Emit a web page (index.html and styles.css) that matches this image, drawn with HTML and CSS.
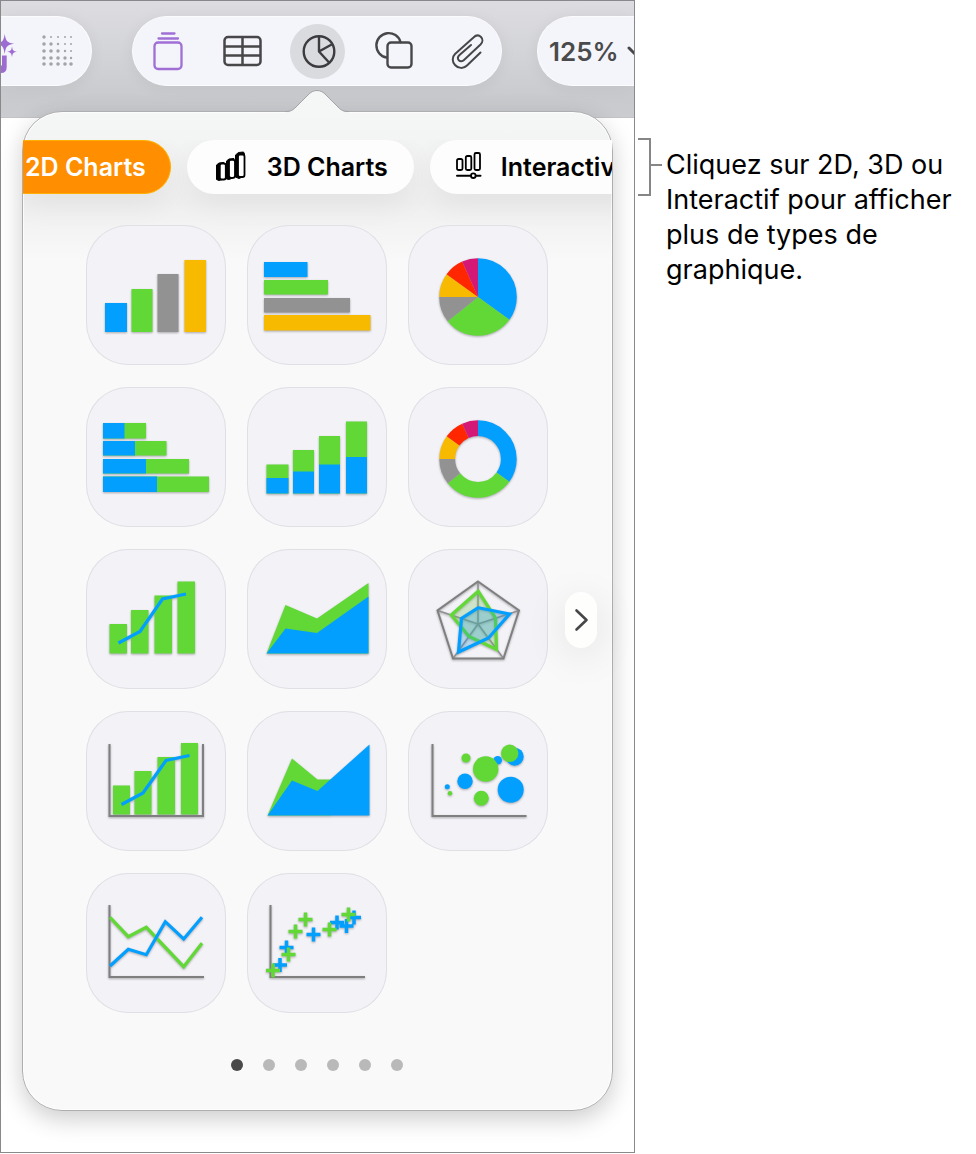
FILE: index.html
```html
<!DOCTYPE html>
<html lang="fr">
<head>
  <title>Types de graphique</title>
  <meta charset="UTF-8">
  <meta name="viewport" content="width=device-width, initial-scale=1">
  <link rel="stylesheet" href="styles.css">
</head>
<body>
  <div class="figure">
    <div class="window">

      <!-- Toolbar -->
      <div class="toolbar">
        <div class="pill pill-left">
          <button class="tool-wand" aria-label="Magic">
            <svg width="18" height="44" viewBox="0 0 18 44" fill="#9d6cd2">
              <path d="M3.700 5C5 12.500 6 13.500 13 14.700C6 16 5 17 3.700 25C2.500 17 1.500 16 -6 14.700C1.500 13.500 2.500 12.500 3.700 5Z"/>
              <path d="M11 17.500C11.700 21.500 12 22 16 22.700C12 23.500 11.700 24 11 28C10.300 24 10 23.500 6 22.700C10 22 10.300 21.500 11 17.500Z"/>
              <path d="M-4 32L1 37V26.500H5.700V38Q5.700 44 0 44H-4Z"/>
            </svg>
          </button>
          <button class="tool-dots" aria-label="Grid">
            <svg width="34" height="34" viewBox="0 0 34 34" fill="#a3a3a8">
              <circle cx="3" cy="3" r="1.700"/><circle cx="10" cy="3" r="1"/><circle cx="17" cy="3" r="1"/><circle cx="24" cy="3" r="1"/><circle cx="30" cy="3" r="1"/>
              <circle cx="3" cy="10" r="1.800"/><circle cx="10" cy="10" r="1.700"/><circle cx="17" cy="10" r="1.200"/><circle cx="24" cy="10" r="1"/><circle cx="30" cy="10" r="1"/>
              <circle cx="3" cy="17" r="1.800"/><circle cx="10" cy="17" r="1.800"/><circle cx="17" cy="17" r="1.700"/><circle cx="24" cy="17" r="1.200"/><circle cx="30" cy="17" r="1"/>
              <circle cx="3" cy="24" r="1.800"/><circle cx="10" cy="24" r="1.800"/><circle cx="17" cy="24" r="1.800"/><circle cx="24" cy="24" r="1.700"/><circle cx="30" cy="24" r="1.200"/>
              <circle cx="3" cy="30" r="1.800"/><circle cx="10" cy="30" r="1.800"/><circle cx="17" cy="30" r="1.800"/><circle cx="24" cy="30" r="1.800"/><circle cx="30" cy="30" r="1.800"/>
            </svg>
          </button>
        </div>

        <div class="pill pill-main">
          <button class="tool" aria-label="Add slide">
            <svg width="40" height="40" viewBox="0 0 40 40" fill="none" stroke="#a06fd6" stroke-width="2.300" stroke-linecap="round">
              <path d="M14 2.500H26.500M10.500 7.500H30"/>
              <rect x="6.500" y="11.500" width="27" height="26.500" rx="3.500"/>
            </svg>
          </button>
          <button class="tool" aria-label="Table">
            <svg width="40" height="40" viewBox="0 0 40 40" fill="none" stroke="#47474a" stroke-width="2.500">
              <rect x="1.500" y="6" width="36" height="28" rx="3.500"/>
              <path d="M1.500 15.500H37.500M1.500 24.500H37.500M19.500 6V34"/>
            </svg>
          </button>
          <button class="tool tool-active" aria-label="Chart">
            <svg width="40" height="40" viewBox="0 0 40 40" fill="none" stroke="#3c3c3f" stroke-width="2.400" stroke-linejoin="round">
              <circle cx="21" cy="20.500" r="15.300"/>
              <path d="M21 5V20.500L34.500 13M21 20.500L31.500 32"/>
            </svg>
          </button>
          <button class="tool" aria-label="Shape">
            <svg width="40" height="40" viewBox="0 0 40 40" fill="none" stroke="#47474a" stroke-width="2.400" stroke-linecap="round">
              <path d="M13.500 26.500A12.300 12.300 0 1 1 27.500 11"/>
              <rect x="14.500" y="11.500" width="24" height="25" rx="3.500"/>
            </svg>
          </button>
          <button class="tool" aria-label="Media">
            <svg width="40" height="40" viewBox="0 0 40 40" fill="none" stroke="#47474a" stroke-width="2" stroke-linecap="round" stroke-linejoin="round">
              <path d="M32.500 21.500L19 34.500C15.500 38 10 37.500 7 34C4 31 4 26 7 23L25.500 6.500C28 4 31 4 33 6C35 8 35 11 32.500 13.500L16 29C14.500 30.500 12 30.500 11 29.500C9.500 28 9.500 26 11.500 24L23 14"/>
            </svg>
          </button>
        </div>

        <div class="pill pill-right">
          <button class="zoom-menu">125%
            <svg width="16" height="10" viewBox="0 0 16 10" fill="none" stroke="#47474a" stroke-width="3" stroke-linecap="round"><path d="M2 2L8 8L14 2"/></svg>
          </button>
        </div>
      </div>

      <!-- Chart popover -->
      <div class="popover">
        <svg class="popover-arrow" width="64" height="26" viewBox="0 0 64 26">
          <path d="M0 24C6 24 8 22 11 19L23 7C28 1 36 1 41 7L53 19C56 22 58 24 64 24V26H0Z" fill="#f5f6f6"/>
          <path d="M0 23.500C6 23.500 8 22 11 19L23 7C28 1 36 1 41 7L53 19C56 22 58 23.500 64 23.500" fill="none" stroke="#a3a4a7"/>
        </svg>

        <div class="tabs">
          <button class="tab tab-selected">2D Charts</button>
          <button class="tab">
            <svg class="tab-icon" width="32" height="32" viewBox="0 0 32 32" stroke="#000" stroke-width="1.800" stroke-linejoin="round">
              <path d="M1.500 14L4 12L9 11.500V28L4 29.500L1.500 28.500Z" fill="#000" stroke-width="1"/>
              <path d="M11.500 10L14 8L19 7.500V26.500L14 28.500L11.500 28Z" fill="#000" stroke-width="1"/>
              <path d="M20.500 4L23.500 1.500L28.500 1L29.500 3V25L24 27.500L20.500 26Z" fill="#000" stroke-width="1"/>
              <rect x="4.800" y="12.500" width="6" height="16" rx="2" fill="#fff"/>
              <rect x="14" y="8.800" width="6" height="18" rx="2" fill="#fff"/>
              <rect x="23" y="3.500" width="6.500" height="22.500" rx="2" fill="#fff"/>
            </svg>
            3D Charts
          </button>
          <button class="tab tab-interactive">
            <svg class="tab-icon" width="26" height="32" viewBox="0 0 26 32" fill="none" stroke="#000" stroke-width="1.800" stroke-linecap="round">
              <rect x="1" y="8" width="5.500" height="11" rx="1.500"/>
              <rect x="9.800" y="5" width="5.500" height="14" rx="1.500"/>
              <rect x="18.500" y="2" width="5.500" height="17" rx="1.500"/>
              <path d="M1 24.700H15M20 24.700H24.500" stroke-width="2"/>
              <circle cx="17.300" cy="24.700" r="2.300"/>
            </svg>
            Interactive
          </button>
        </div>

        <div class="chart-grid">
          <button class="chart" aria-label="Column">
            <svg viewBox="0 0 140 140">
              <path class="blue" d="M19 78h22v29h-22z"/>
              <path class="green" d="M45.500 64h21v43h-21z"/>
              <path class="gray" d="M71.500 49h21v58h-21z"/>
              <path class="yellow" d="M98.500 35h21.500v72h-21.500z"/>
            </svg>
          </button>
          <button class="chart" aria-label="Bar">
            <svg viewBox="0 0 140 140">
              <path class="blue" d="M17 37h43.500v15h-43.500z"/>
              <path class="green" d="M17 55h64v14.500h-64z"/>
              <path class="gray" d="M17 73h86v14.500h-86z"/>
              <path class="yellow" d="M17 90h106.500v15.500h-106.500z"/>
            </svg>
          </button>
          <button class="chart" aria-label="Pie">
            <svg viewBox="0 0 140 140">
              <g class="ring pie" transform="rotate(-90 70 72)">
                <circle class="s-blue" cx="70" cy="72" r="19.400" pathLength="100" stroke-dasharray="35 65"/>
                <circle class="s-green" cx="70" cy="72" r="19.400" pathLength="100" stroke-dasharray="29.200 70.800" stroke-dashoffset="-35"/>
                <circle class="s-gray" cx="70" cy="72" r="19.400" pathLength="100" stroke-dasharray="10.800 89.200" stroke-dashoffset="-64.200"/>
                <circle class="s-yellow" cx="70" cy="72" r="19.400" pathLength="100" stroke-dasharray="10 90" stroke-dashoffset="-75"/>
                <circle class="s-red" cx="70" cy="72" r="19.400" pathLength="100" stroke-dasharray="8.300 91.700" stroke-dashoffset="-85"/>
                <circle class="s-pink" cx="70" cy="72" r="19.400" pathLength="100" stroke-dasharray="6.700 93.300" stroke-dashoffset="-93.300"/>
              </g>
            </svg>
          </button>

          <button class="chart" aria-label="Stacked bar">
            <svg viewBox="0 0 140 140">
              <path class="green" d="M17 36h43v15.500h-43zM17 54h63.500v14.500h-63.500zM17 72h86v14.500h-86zM17 89.500h106v15.500h-106z"/>
              <path class="blue" d="M17 36h21.500v15.500h-21.500zM17 54h32v14.500h-32zM17 72h43v14.500h-43zM17 89.500h54v15.500h-54z"/>
            </svg>
          </button>
          <button class="chart" aria-label="Stacked column">
            <svg viewBox="0 0 140 140">
              <path class="green" d="M19.500 77.500h22v29h-22zM46 63h21v43.500h-21zM72 49h21v57.500h-21zM99 34.500h21v72h-21z"/>
              <path class="blue" d="M19.500 91h22v15.500h-22zM46 84.500h21v22h-21zM72 77.500h21v29h-21zM99 70h21v36.500h-21z"/>
            </svg>
          </button>
          <button class="chart" aria-label="Donut">
            <svg viewBox="0 0 140 140">
              <g class="ring donut" transform="rotate(-90 70 72)">
                <circle class="s-blue" cx="70" cy="72" r="30.800" pathLength="100" stroke-dasharray="35 65"/>
                <circle class="s-green" cx="70" cy="72" r="30.800" pathLength="100" stroke-dasharray="29.200 70.800" stroke-dashoffset="-35"/>
                <circle class="s-gray" cx="70" cy="72" r="30.800" pathLength="100" stroke-dasharray="10.800 89.200" stroke-dashoffset="-64.200"/>
                <circle class="s-yellow" cx="70" cy="72" r="30.800" pathLength="100" stroke-dasharray="10 90" stroke-dashoffset="-75"/>
                <circle class="s-red" cx="70" cy="72" r="30.800" pathLength="100" stroke-dasharray="8.300 91.700" stroke-dashoffset="-85"/>
                <circle class="s-pink" cx="70" cy="72" r="30.800" pathLength="100" stroke-dasharray="6.700 93.300" stroke-dashoffset="-93.300"/>
              </g>
            </svg>
          </button>

          <button class="chart" aria-label="Column and line">
            <svg viewBox="0 0 140 140">
              <path class="green" d="M23.500 75h17.500v29.500h-17.500zM45 61h17.500v43.500h-17.500zM68.500 46.500h17.500v58h-17.500zM91.500 32.500h17.500v72h-17.500z"/>
              <path class="line s-blue" d="M32.500 94L54 82.500L76.500 50L100 45"/>
            </svg>
          </button>
          <button class="chart" aria-label="Stacked area">
            <svg viewBox="0 0 140 140">
              <path class="green" d="M19.500 104.500L38.500 56L70 69.500L121.500 34V104.500Z"/>
              <path class="blue" d="M19.500 104.500L38.500 79.500L70 84L121.500 47.500V104.500Z"/>
            </svg>
          </button>
          <button class="chart" aria-label="Radar">
            <svg viewBox="0 0 140 140">
              <path class="spokes" d="M70 75V32.500M70 75L111 61.500M70 75L95.500 109.500M70 75L45 109.500M70 75L29.500 61.500"/>
              <path class="web" d="M70 32.500L111 61.500L95.500 109.500H45L29.500 61.500Z"/>
              <path class="line s-green f-green" d="M70.300 42.300L87.500 69L88.500 100.500L61 87.500L43.300 66Z"/>
              <path class="line s-blue f-blue" d="M70.300 58.700L101.500 65L80.500 89L50.500 103L53.500 69.500Z"/>
            </svg>
          </button>

          <button class="chart" aria-label="Two axis">
            <svg viewBox="0 0 140 140">
              <path class="axis" d="M23.500 33V105H117V33"/>
              <path class="green" d="M27 74.500h17v29h-17zM48.500 60h17v43.500h-17zM71.500 46h17.500v57.500h-17.500zM95 32h17v71.500h-17z"/>
              <path class="line s-blue" d="M35.500 93.500L57 82L80 49.500L103.500 44.500"/>
            </svg>
          </button>
          <button class="chart" aria-label="Area">
            <svg viewBox="0 0 140 140">
              <path class="green" d="M20.500 104.500L45 47.500L70.500 68.500H84V104.500Z"/>
              <path class="blue" d="M20.500 104.500L45 69.500L70.500 80L122.500 33.500V104.500Z"/>
            </svg>
          </button>
          <button class="chart" aria-label="Bubble">
            <svg viewBox="0 0 140 140">
              <path class="axis" d="M24.500 33V105H118.500"/>
              <g class="blue">
                <circle cx="39.300" cy="75.700" r="2.500"/>
                <circle cx="57" cy="70.300" r="7.700"/>
                <circle cx="89.700" cy="49.300" r="4.300"/>
                <circle cx="106.700" cy="45.700" r="9"/>
                <circle cx="102.700" cy="78.700" r="13"/>
              </g>
              <g class="green">
                <circle cx="42" cy="82.300" r="2.300"/>
                <circle cx="58" cy="47" r="4.500"/>
                <circle cx="77.700" cy="58" r="12.700"/>
                <circle cx="101.700" cy="42.300" r="8.700"/>
                <circle cx="73.300" cy="87.300" r="7.500"/>
              </g>
            </svg>
          </button>

          <button class="chart" aria-label="Line">
            <svg viewBox="0 0 140 140">
              <path class="axis" d="M23.500 32V104H118"/>
              <path class="line s-green" d="M24 44.300L42.300 63.700L60.300 54.300L97.700 93.700L116 70.300"/>
              <path class="line s-blue" d="M24 93L42.300 76.300L60.300 81.700L79.300 48.700L97.700 66L116 44.300"/>
            </svg>
          </button>
          <button class="chart" aria-label="Scatter">
            <svg viewBox="0 0 140 140">
              <path class="axis" d="M23.500 32V104H118"/>
              <path class="plus s-blue" d="M59.500 61.500h14m-7-7v14M32.500 74.500h14m-7-7v14M26 92h14m-7-7v14M83 49.500h14m-7-7v14M92.500 53h14m-7-7v14M100 44.500h14m-7-7v14"/>
              <path class="plus s-green" d="M51.500 46.500h14m-7-7v14M41.500 58.500h14m-7-7v14M34.500 81.500h14m-7-7v14M19 97.500h14m-7-7v14M75.500 56.500h14m-7-7v14M94.500 41.500h14m-7-7v14"/>
            </svg>
          </button>
        </div>

        <div class="pager">
          <button class="dot dot-current" aria-label="Page 1"></button>
          <button class="dot" aria-label="Page 2"></button>
          <button class="dot" aria-label="Page 3"></button>
          <button class="dot" aria-label="Page 4"></button>
          <button class="dot" aria-label="Page 5"></button>
          <button class="dot" aria-label="Page 6"></button>
        </div>

        <button class="next" aria-label="Next">
          <svg width="16" height="24" viewBox="0 0 16 24" fill="none" stroke="#47474a" stroke-width="2.600" stroke-linecap="round" stroke-linejoin="round"><path d="M3.500 2.500L13.500 12L3.500 21.500"/></svg>
        </button>
      </div>
    </div>

    <!-- Callout -->
    <div class="callout">
      <svg class="bracket" width="24" height="60" viewBox="0 0 24 60" fill="none" stroke="#868686" stroke-width="2">
        <path d="M0 2H12V58H0M12 28H24"/>
      </svg>
      <p>Cliquez sur 2D, 3D ou Interactif pour afficher plus de types de graphique.</p>
    </div>
  </div>
</body>
</html>
```

FILE: styles.css
```css
* {
  box-sizing: border-box;
}

body {
  margin: 0;
  background: #fff;
  font-family: Inter, "Liberation Sans", sans-serif;
  color: #000;
}

button {
  border: none;
  margin: 0;
  padding: 0;
  background: none;
  font: inherit;
  color: inherit;
  cursor: pointer;
}

svg {
  display: block;
  flex-shrink: 0;
}

.figure {
  display: grid;
  grid-template-columns: minmax(0, 1fr) 341px;
  align-items: start;
}

.window {
  border: 1px solid #89898c;
  overflow: hidden;
}

/* Toolbar */
.toolbar {
  display: flex;
  height: 117px;
  padding-top: 15px;
  background: linear-gradient(#dddde1, #d2d3d7 50%, #c9cacd 85%, #cbccd0);
  border-bottom: 1px solid #c3c3c6;
}

.pill {
  display: flex;
  align-items: center;
  height: 70px;
  background: #f4f5fa;
  border: 1px solid #fcfcfe;
  box-shadow: 0 2px 16px rgba(0, 0, 0, 0.06);
}

.pill-left {
  width: 91px;
  margin-right: 40px;
  gap: 22px;
  border-left: none;
  border-radius: 0 35px 35px 0;
}

.pill-main {
  gap: 20px;
  padding: 0 6px 0 7px;
  margin-right: 35px;
  border-radius: 35px;
}

.pill-right {
  flex: 1;
  min-width: 0;
  overflow: hidden;
  padding-left: 11px;
  border-right: none;
  border-radius: 35px 0 0 35px;
}

.tool {
  display: flex;
  align-items: center;
  justify-content: center;
  width: 55px;
  height: 55px;
  border-radius: 50%;
}

.tool-active {
  background: #dadbdf;
}

.zoom-menu {
  display: flex;
  align-items: center;
  gap: 8px;
  font-size: 26px;
  font-weight: 600;
  color: #4a4a4d;
}

/* Popover */
.popover {
  position: relative;
  margin: -7px 21px 41px;
  padding: 28px 0 39px;
  border: 1px solid #aeaeb0;
  border-radius: 40px;
  background: linear-gradient(#f5f6f6, #efefef 9%, #f9f9f9 15%, #f9f9f9);
  box-shadow: inset 0 0 0 1px #fdfdfd, 0 8px 24px rgba(0, 0, 0, 0.2);
}

.popover-arrow {
  position: absolute;
  top: -24px;
  left: 50%;
  margin-left: -33px;
}

.tabs {
  display: flex;
  gap: 16px;
  margin-bottom: -39px;
  padding-bottom: 70px;
  overflow: hidden;
}

.tab {
  display: flex;
  align-items: center;
  flex-shrink: 0;
  gap: 20px;
  height: 54px;
  padding: 0 26px 0 28px;
  border-radius: 27px;
  background: #fdfdfd;
  box-shadow: 0 10px 30px rgba(0, 0, 0, 0.06);
  font-size: 25px;
  font-weight: 600;
}

.tab-selected {
  padding: 0 24px 0 2px;
  border: 1px solid #ffb000;
  border-left: none;
  border-radius: 0 27px 27px 0;
  background: #ff8e00;
  color: #fff;
}

.tab-interactive {
  gap: 19px;
  padding-left: 26px;
}

.chart-grid {
  position: relative;
  display: grid;
  grid-template-columns: repeat(3, 140px);
  justify-content: center;
  gap: 22px 21px;
  padding-right: 1px;
}

.chart {
  width: 140px;
  height: 140px;
  border-radius: 42px;
  background: #f2f2f7;
  box-shadow: inset 0 0 0 1px #dfdfe4;
}

.pager {
  display: flex;
  justify-content: center;
  gap: 20px;
  margin-top: 46px;
  padding-right: 2px;
}

.dot {
  width: 12px;
  height: 12px;
  border-radius: 50%;
  background: #b9b9b9;
}

.dot-current {
  background: #4a4a4a;
}

.next {
  position: absolute;
  top: 480px;
  right: 15px;
  display: flex;
  align-items: center;
  justify-content: center;
  width: 32px;
  height: 56px;
  border-radius: 16px;
  background: #fefefd;
  box-shadow: 0 8px 40px rgba(0, 0, 0, 0.1);
}

/* Chart thumbnails */
.chart svg {
  filter: drop-shadow(0 1px 1px rgba(0, 0, 0, 0.3));
}

.blue { fill: #029fff; }
.green { fill: #61d836; }
.gray { fill: #929292; }
.yellow { fill: #f8ba00; }

.s-blue { stroke: #029fff; }
.s-green { stroke: #61d836; }
.s-gray { stroke: #929292; }
.s-yellow { stroke: #f8ba00; }
.s-red { stroke: #ff2600; }
.s-pink { stroke: #d41876; }

.ring,
.line,
.plus,
.axis,
.web,
.spokes {
  fill: none;
}

.pie { stroke-width: 38.8; }
.donut { stroke-width: 15.8; }
.line { stroke-width: 3.2; }
.plus { stroke-width: 3.5; }

.axis,
.web {
  stroke: #7f7f80;
  stroke-width: 2;
}

.spokes {
  stroke: #8e8e90;
  stroke-width: 1.5;
}

.f-green { fill: rgba(97, 216, 54, 0.18); }
.f-blue { fill: rgba(2, 159, 255, 0.2); }

/* Callout */
.callout {
  display: flex;
  align-items: flex-start;
  gap: 4px;
  padding: 137px 0 0 3px;
}

.callout p {
  margin: 10px 0 0;
  font-size: 27px;
  line-height: 35px;
}
```
